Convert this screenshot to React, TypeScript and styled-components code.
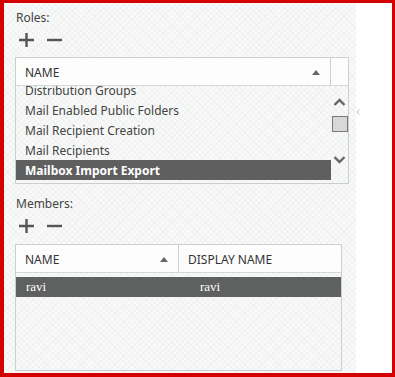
import styled, { createGlobalStyle } from "styled-components";

const GlobalStyle = createGlobalStyle`
    html, body { margin: 0; padding: 0; background: #fff; }
    body { font-family: "Noto Sans", "Open Sans", sans-serif; }
`;

const Frame = styled.div`
    width: 395px; height: 377px; box-sizing: border-box;
    border: solid #d40000; border-width: 3px 3px 4px 4px;
    background: #fff; display: flex; overflow: hidden;
`;
const Panel = styled.div`
    width: 352px; height: 100%; box-sizing: border-box; padding: 7px 0 0 11px;
    background-color: #f8f9f8;
    background-image:
        repeating-linear-gradient(45deg, rgba(225,232,228,0.35) 0 1px, transparent 1px 4px),
        repeating-linear-gradient(-45deg, rgba(225,232,228,0.35) 0 1px, transparent 1px 4px);
    display: flex; flex-direction: column;
`;
const Label = styled.div<{ $top?: number }>`
    font-size: 12px; line-height: 16px; color: #444; padding-left: 1px;
    margin-top: ${p => p.$top || 0}px;
`;
const Tools = styled.div`
    display: flex; align-items: center; gap: 13px; height: 14px;
    margin: 7px 0 0 4px;
    & svg { display: block; }
`;
const TableRow = styled.div<{ $top: number }>`
    display: flex; align-items: flex-start; margin-top: ${p => p.$top}px;
`;
const Table = styled.div<{ $w: number; $h: number }>`
    width: ${p => p.$w}px; height: ${p => p.$h}px; box-sizing: border-box;
    border: 1px solid #c9d0cd; background: transparent;
    display: flex; flex-direction: column; flex-shrink: 0;
`;
const Head = styled.div`
    display: flex; height: 27px; border-bottom: 1px solid #d3d9d6; background: #fcfdfc; flex-shrink: 0;
`;
const HeadCell = styled.div<{ $w: number; $divider?: boolean }>`
    width: ${p => p.$w}px; box-sizing: border-box; flex-shrink: 0;
    display: flex; align-items: center; justify-content: space-between;
    padding: 1px 10px 0 9px; font-size: 12px; color: #333;
    border-right: ${p => (p.$divider ? "1px solid #c9d0cd" : "none")};
`;
const SortUp = styled.span`
    width: 0; height: 0; border-left: 4px solid transparent; border-right: 4px solid transparent;
    border-bottom: 5px solid #666;
`;
const Body = styled.div<{ $pad?: number }>`
    flex: 1; display: flex; overflow: hidden; padding-top: ${p => p.$pad || 0}px;
`;
const List = styled.div<{ $w: number }>`
    width: ${p => p.$w}px; overflow: hidden; flex-shrink: 0;
`;
const Scroller = styled.div<{ $offset: number }>`
    margin-top: ${p => p.$offset}px;
`;
const Item = styled.div<{ $selected?: boolean }>`
    height: 20px; display: flex; align-items: center; padding-left: 9px;
    font-size: 12px; color: #444; white-space: nowrap;
    ${p => p.$selected && `background: #5f5f5f; color: #fff; font-weight: 700;`}
`;
const Scrollbar = styled.div`
    flex: 1; display: flex; flex-direction: column; align-items: center;
    padding-top: 12px;
`;
const Thumb = styled.div`
    width: 16px; height: 16px; margin-top: 9px;
    background: #d8d8d8; border: 1px solid #777; box-sizing: border-box;
`;
const Spacer = styled.div` flex: 1; `;
const DownArrow = styled.div` margin-bottom: 14px; `;
const Handle = styled.div`
    margin: 41px 0 0 7px;
`;
const MemberRow = styled.div<{ $selected?: boolean }>`
    display: flex; height: 20px; align-items: center;
    background: ${p => (p.$selected ? "#5f6160" : "transparent")};
    color: ${p => (p.$selected ? "#fff" : "#333")};
    font-family: "Liberation Serif", serif; font-size: 13px;
`;
const MemberCell = styled.div<{ $w: number; $pad: number }>`
    width: ${p => p.$w}px; padding-left: ${p => p.$pad}px; box-sizing: border-box; flex-shrink: 0;
`;

const Plus = () => (
    <svg width="15" height="14" viewBox="0 0 15 14">
        <path d="M0 7h15M7.5 0v14" stroke="#555" strokeWidth="2.4" />
    </svg>
);
const Minus = () => (
    <svg width="15" height="14" viewBox="0 0 15 14">
        <path d="M0 7h15" stroke="#555" strokeWidth="2.4" />
    </svg>
);
const Chevron = ({ down }: { down?: boolean }) => (
    <svg width="13" height="9" viewBox="0 0 13 9">
        <path d={down ? "M1.5 2l5 5 5-5" : "M1.5 7l5-5 5 5"} fill="none" stroke="#666" strokeWidth="2.4" />
    </svg>
);

const roles = [
    "Distribution Groups",
    "Mail Enabled Public Folders",
    "Mail Recipient Creation",
    "Mail Recipients",
    "Mailbox Import Export",
];

export default function App() {
    return (
        <>
            <GlobalStyle />
            <Frame>
                <Panel>
                    <Label>Roles:</Label>
                    <Tools><Plus /><Minus /></Tools>
                    <TableRow $top={10}>
                        <Table $w={334} $h={127}>
                            <Head>
                                <HeadCell $w={315} $divider>NAME<SortUp /></HeadCell>
                                <HeadCell $w={17} />
                            </Head>
                            <Body>
                                <List $w={315}>
                                    <Scroller $offset={-6}>
                                        {roles.map((r, i) => (
                                            <Item key={r} $selected={i === roles.length - 1}>{r}</Item>
                                        ))}
                                    </Scroller>
                                </List>
                                <Scrollbar>
                                    <Chevron />
                                    <Thumb />
                                    <Spacer />
                                    <DownArrow><Chevron down /></DownArrow>
                                </Scrollbar>
                            </Body>
                        </Table>
                        <Handle>
                            <svg width="4" height="6" viewBox="0 0 4 6">
                                <path d="M3.5 0.5L1 3l2.5 2.5" fill="none" stroke="#bbb" strokeWidth="1" />
                            </svg>
                        </Handle>
                    </TableRow>
                    <Label $top={12}>Members:</Label>
                    <Tools><Plus /><Minus /></Tools>
                    <TableRow $top={11}>
                        <Table $w={327} $h={127}>
                            <Head>
                                <HeadCell $w={163} $divider>NAME<SortUp /></HeadCell>
                                <HeadCell $w={162}>DISPLAY NAME</HeadCell>
                            </Head>
                            <Body $pad={4}>
                                <List $w={325}>
                                    <MemberRow $selected>
                                        <MemberCell $w={163} $pad={10}>ravi</MemberCell>
                                        <MemberCell $w={162} $pad={21}>ravi</MemberCell>
                                    </MemberRow>
                                </List>
                            </Body>
                        </Table>
                    </TableRow>
                </Panel>
            </Frame>
        </>
    );
}
